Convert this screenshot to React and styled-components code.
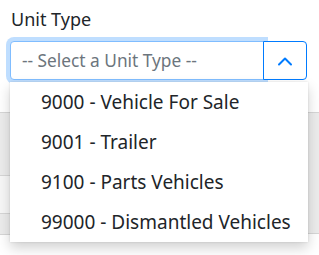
import React from "react";
import styled, { createGlobalStyle } from "styled-components";

const GlobalStyle = createGlobalStyle`
  body {
    margin: 0;
    background: #fff;
    font-family: "Noto Sans", "Open Sans", sans-serif;
    color: #212529;
  }
`;

const Page = styled.div`
  position: relative;
  width: 319px;
  height: 255px;
  overflow: hidden;
`;

const Field = styled.div`
  padding: 7px 0 0 10px;
`;

const Label = styled.label`
  display: block;
  font-size: 18px;
  line-height: 24px;
  margin: 0 0 10px 1px;
`;

const Group = styled.div`
  position: relative;
  display: flex;
  width: 297px;
  height: 39px;
`;

const Input = styled.input`
  flex: 1;
  min-width: 0;
  box-sizing: border-box;
  height: 39px;
  padding: 0 11px;
  border: 1px solid #80bdff;
  border-radius: 4px 0 0 4px;
  box-shadow: 0 0 0 4px rgba(0, 123, 255, 0.25);
  font-family: inherit;
  font-size: 17.3px;
  color: #495057;
  outline: none;
  &::placeholder {
    color: #6c757d;
  }
`;

const ToggleButton = styled.button`
  position: relative;
  z-index: 1;
  flex: 0 0 44px;
  margin-left: -1px;
  box-sizing: border-box;
  height: 39px;
  display: flex;
  align-items: center;
  justify-content: center;
  background: #fff;
  border: 1px solid #007bff;
  border-radius: 0 4px 4px 0;
  padding: 0;
`;

const Menu = styled.ul`
  position: absolute;
  z-index: 2;
  top: 41px;
  left: 0;
  width: 298px;
  margin: 0;
  padding: 0;
  list-style: none;
  background: #fff;
  box-shadow: 0 6px 12px rgba(0, 0, 0, 0.18), 0 0 2px rgba(0, 0, 0, 0.12);
`;

const Item = styled.li`
  height: 40px;
  line-height: 40px;
  padding-left: 31px;
  font-size: 19px;
  color: #212529;
  white-space: nowrap;
`;

const Backdrop = styled.div`
  display: grid;
  grid-template-columns: 308px 11px;
  margin-top: 32px;
`;

const Rows = styled.div`
  display: flex;
  flex-direction: column;
`;

const Row = styled.div`
  height: ${(p) => p.$h}px;
  background: ${(p) => (p.$shade ? "#ececec" : "#f7f7f7")};
  border-top: 1px solid #d6d6d6;
  box-sizing: border-box;
`;

const Side = styled.div`
  height: 122px;
  background: #ececec;
  border-top: 1px solid #d6d6d6;
  border-bottom: 1px solid #d6d6d6;
  box-sizing: border-box;
`;

const options = [
  "9000 - Vehicle For Sale",
  "9001 - Trailer",
  "9100 - Parts Vehicles",
  "99000 - Dismantled Vehicles",
];

export default function App() {
  return (
    <Page>
      <GlobalStyle />
      <Field>
        <Label>Unit Type</Label>
        <Group>
          <Input placeholder="-- Select a Unit Type --" readOnly />
          <ToggleButton aria-label="Close">
            <svg width="16" height="10" viewBox="0 0 16 10">
              <path
                d="M2 8.5 L8 2.5 L14 8.5"
                fill="none"
                stroke="#007bff"
                strokeWidth="2"
                strokeLinecap="round"
                strokeLinejoin="round"
              />
            </svg>
          </ToggleButton>
          <Menu>
            {options.map((o) => (
              <Item key={o}>{o}</Item>
            ))}
          </Menu>
        </Group>
      </Field>
      <Backdrop>
        <Rows>
          <Row $h={63} $shade />
          <Row $h={38} />
          <Row $h={21} $shade />
          <Row $h={1} />
        </Rows>
        <Side />
      </Backdrop>
    </Page>
  );
}
